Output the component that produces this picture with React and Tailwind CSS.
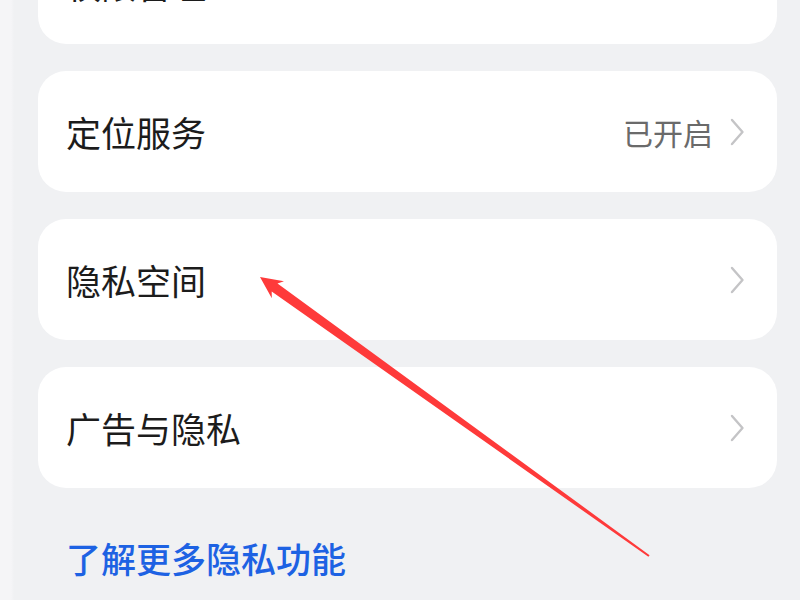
const rows = [
  { title: '权限管理', value: '' },
  { title: '定位服务', value: '已开启' },
  { title: '隐私空间', value: '' },
  { title: '广告与隐私', value: '' },
]

function Chevron() {
  return (
    <svg width="15" height="28" viewBox="0 0 15 28" className="shrink-0">
      <polyline points="2,2 12.5,14 2,26" fill="none" stroke="#c4c4c6" strokeWidth="2.4" strokeLinecap="round" strokeLinejoin="round" />
    </svg>
  )
}

function Row({ title, value }) {
  return (
    <div className="h-[121px] rounded-[28px] bg-white pl-[28px] pr-[32px] flex items-center justify-between">
      <span className="text-[35px] leading-none text-[#1c1c1c]">{title}</span>
      <div className="flex items-center gap-[17px]">
        {value && <span className="text-[30px] leading-none text-[#6a6a6a]">{value}</span>}
        <Chevron />
      </div>
    </div>
  )
}

export default function App() {
  return (
    <div
      className="relative w-[800px] h-[600px] overflow-hidden bg-[linear-gradient(to_right,#f5f5f7_11px,#f0f1f3_14px)]"
      style={{ fontFamily: '"Noto Sans CJK SC", "Noto Sans", sans-serif' }}
    >
      <div className="flex flex-col gap-[27px] pl-[38px] pr-[23px] -mt-[77px]">
        {rows.map((r) => (
          <Row key={r.title} title={r.title} value={r.value} />
        ))}
      </div>

      <div className="pl-[66px] mt-[52px]">
        <span className="text-[35px] leading-none font-medium text-[#1d62e3]">了解更多隐私功能</span>
      </div>

      {/* annotation arrow */}
      <svg className="absolute inset-0 pointer-events-none" width="800" height="600" viewBox="0 0 800 600">
        <polygon
          points="260,277 284,281.3 277.5,283.4 649.6,555.2 648.4,556.8 271.7,291.6 271.8,298.3"
          fill="#fe3a3a"
        />
      </svg>
    </div>
  )
}
